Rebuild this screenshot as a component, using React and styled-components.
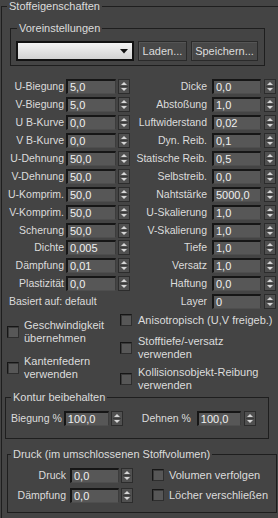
import React from 'react';
import styled, { createGlobalStyle } from 'styled-components';

const GlobalStyle = createGlobalStyle`
  html, body {
    margin: 0;
    padding: 0;
    background: #444444;
  }
  body {
    font-family: "Liberation Sans", Arial, sans-serif;
    font-size: 10.5px;
    color: #dcdcdc;
  }
`;

const Panel = styled.div`
  width: 278px;
  height: 518px;
  overflow: hidden;
  background: #444444;
`;

const Group = styled.fieldset`
  box-sizing: border-box;
  margin: ${(p) => p.$margin || '0'};
  padding: 0;
  width: ${(p) => p.$width}px;
  min-width: 0;
  min-height: ${(p) => (p.$minHeight ? `${p.$minHeight}px` : 'auto')};
  border: 1px solid #1e1e1e;
`;

const Legend = styled.legend`
  margin-left: ${(p) => p.$offset}px;
  padding: 0 2px;
  line-height: 13px;
  height: 13px;
  font-size: 11px;
  color: #dcdcdc;
  white-space: nowrap;
`;

const PresetRow = styled.div`
  display: flex;
  gap: 4px;
  padding: 6px 0 4px 5px;
`;

const Dropdown = styled.div`
  box-sizing: border-box;
  width: 118px;
  height: 20px;
  border: 2px solid #121212;
  background: linear-gradient(#f4f4f4, #d2d2d2);
  display: flex;
  align-items: center;
  justify-content: flex-end;
  padding-right: 4px;
`;

const Button = styled.div`
  box-sizing: border-box;
  width: ${(p) => p.$width}px;
  height: 20px;
  border: 1px solid #2a2a2a;
  background: #484848;
  box-shadow: inset 1px 1px 0 #555555;
  display: flex;
  align-items: center;
  justify-content: center;
  font-size: 11px;
  color: #dcdcdc;
`;

const Columns = styled.div`
  display: flex;
  margin-top: ${(p) => p.$top || 0}px;
`;

const Column = styled.div`
  width: ${(p) => p.$width}px;
  padding-left: ${(p) => p.$padLeft || 0}px;
  box-sizing: border-box;
  display: flex;
  flex-direction: column;
`;

const ParamRow = styled.div`
  height: 17.9px;
  display: flex;
  align-items: center;
  justify-content: ${(p) => (p.$start ? 'flex-start' : 'flex-end')};
  padding-right: ${(p) => p.$padRight || 0}px;
  padding-left: ${(p) => p.$padLeft || 0}px;
`;

const Label = styled.span`
  white-space: nowrap;
  margin-right: ${(p) => p.$gap ?? 2}px;
  margin-left: ${(p) => p.$left || 0}px;
  width: ${(p) => (p.$width ? `${p.$width}px` : 'auto')};
  text-align: right;
  line-height: 13px;
`;

const Field = styled.div`
  box-sizing: border-box;
  width: ${(p) => p.$width}px;
  height: 15px;
  background: #575757;
  border-top: 2px solid #161616;
  border-left: 2px solid #161616;
  border-right: 1px solid #3c3c3c;
  border-bottom: 1px solid #4e4e4e;
  color: #f0f0f0;
  font-size: 11px;
  line-height: 12px;
  padding-left: 2px;
  white-space: nowrap;
  overflow: hidden;
`;

const SpinBox = styled.div`
  box-sizing: border-box;
  width: 12px;
  height: 15px;
  margin-left: ${(p) => p.$left ?? 2}px;
  background: #505050;
  border: 1px solid #2c2c2c;
  display: flex;
  svg {
    display: block;
  }
`;

const CheckColumn = styled.div`
  width: ${(p) => p.$width}px;
  padding-left: ${(p) => p.$padLeft || 0}px;
  box-sizing: border-box;
  display: flex;
  flex-direction: column;
`;

const CheckItem = styled.div`
  display: flex;
  align-items: center;
  gap: ${(p) => p.$gap ?? 6}px;
  margin-top: ${(p) => p.$top || 0}px;
  margin-left: ${(p) => p.$left || 0}px;
  line-height: 13px;
  font-size: 11px;
`;

const Box = styled.div`
  box-sizing: border-box;
  flex: none;
  width: 12px;
  height: 12px;
  background: #575757;
  border-top: 1px solid #161616;
  border-left: 1px solid #161616;
  border-right: 1px solid #2e2e2e;
  border-bottom: 1px solid #2e2e2e;
  box-shadow: inset 1px 1px 0 #3a3a3a;
`;

const CheckText = styled.span`
  white-space: nowrap;
`;

const InlineRow = styled.div`
  display: flex;
  align-items: center;
  height: 15px;
  padding: ${(p) => p.$padding || '0'};
  margin-top: ${(p) => p.$top || 0}px;
`;

const Spacer = styled.div`
  height: ${(p) => p.$height}px;
`;

function Spinner({ left }) {
  return (
    <SpinBox $left={left}>
      <svg width="10" height="13" viewBox="0 0 10 13">
        <path d="M2 5 L5 2 L8 5 Z" fill="#d6d6d6" />
        <line x1="1" y1="6.5" x2="9" y2="6.5" stroke="#3a3a3a" strokeWidth="1" />
        <path d="M2 8 L5 11 L8 8 Z" fill="#d6d6d6" />
      </svg>
    </SpinBox>
  );
}

const leftParams = [
  ['U-Biegung', '5,0'],
  ['V-Biegung', '5,0'],
  ['U B-Kurve', '0,0'],
  ['V B-Kurve', '0,0'],
  ['U-Dehnung', '50,0'],
  ['V-Dehnung', '50,0'],
  ['U-Komprim.', '50,0'],
  ['V-Komprim.', '50,0'],
  ['Scherung', '50,0'],
  ['Dichte', '0,005'],
  ['Dämpfung', '0,01'],
  ['Plastizität', '0,0'],
];

const rightParams = [
  ['Dicke', '0,0'],
  ['Abstoßung', '1,0'],
  ['Luftwiderstand', '0,02'],
  ['Dyn. Reib.', '0,1'],
  ['Statische Reib.', '0,5'],
  ['Selbstreib.', '0,0'],
  ['Nahtstärke', '5000,0'],
  ['U-Skalierung', '1,0'],
  ['V-Skalierung', '1,0'],
  ['Tiefe', '1,0'],
  ['Versatz', '1,0'],
  ['Haftung', '0,0'],
  ['Layer', '0'],
];

function DropArrow() {
  return (
    <svg width="8" height="5" viewBox="0 0 8 5">
      <path d="M0 0 L8 0 L4 4.5 Z" fill="#111" />
    </svg>
  );
}

export default function App() {
  return (
    <Panel>
      <GlobalStyle />
      <Group $width={292} $margin="0 0 0 1px" $minHeight={540}>
        <Legend $offset={5}>Stoffeigenschaften</Legend>

        <Group $width={255} $margin="9px 0 0 8px">
          <Legend $offset={6}>Voreinstellungen</Legend>
          <PresetRow>
            <Dropdown>
              <DropArrow />
            </Dropdown>
            <Button $width={49}>Laden...</Button>
            <Button $width={67}>Speichern...</Button>
          </PresetRow>
        </Group>

        <Columns $top={12}>
          <Column $width={129}>
            {leftParams.map(([label, value]) => (
              <ParamRow key={label} $padRight={1}>
                <Label>{label}</Label>
                <Field $width={50}>{value}</Field>
                <Spinner />
              </ParamRow>
            ))}
            <ParamRow $start $padLeft={7}>
              <Label>Basiert auf: default</Label>
            </ParamRow>
          </Column>
          <Column $width={145}>
            {rightParams.map(([label, value]) => (
              <ParamRow key={label}>
                <Label $gap={5}>{label}</Label>
                <Field $width={49}>{value}</Field>
                <Spinner left={3} />
              </ParamRow>
            ))}
          </Column>
        </Columns>

        <Columns>
          <CheckColumn $width={118} $padLeft={5}>
            <CheckItem $top={8} $gap={5}>
              <Box />
              <CheckText>
                Geschwindigkeit
                <br />
                übernehmen
              </CheckText>
            </CheckItem>
            <CheckItem $top={10} $gap={5}>
              <Box />
              <CheckText>
                Kantenfedern
                <br />
                verwenden
              </CheckText>
            </CheckItem>
          </CheckColumn>
          <CheckColumn $width={156}>
            <CheckItem $top={3}>
              <Box />
              <CheckText>Anisotropisch (U,V freigeb.)</CheckText>
            </CheckItem>
            <CheckItem $top={8}>
              <Box />
              <CheckText>
                Stofftiefe/-versatz
                <br />
                verwenden
              </CheckText>
            </CheckItem>
            <CheckItem $top={5}>
              <Box />
              <CheckText>
                Kollisionsobjekt-Reibung
                <br />
                verwenden
              </CheckText>
            </CheckItem>
          </CheckColumn>
        </Columns>

        <Group $width={264} $margin="-1px 0 0 3px">
          <Legend $offset={5}>Kontur beibehalten</Legend>
          <InlineRow $padding="0 0 0 5px" $top={7}>
            <Label>Biegung %</Label>
            <Field $width={45}>100,0</Field>
            <Spinner left={2} />
            <Label $left={19} $gap={6}>
              Dehnen %
            </Label>
            <Field $width={44}>100,0</Field>
            <Spinner left={3} />
          </InlineRow>
          <Spacer $height={12} />
        </Group>

        <Group $width={270} $margin="9px 0 0 5px">
          <Legend $offset={3}>Druck (im umschlossenen Stoffvolumen)</Legend>
          <InlineRow $top={7}>
            <Label $width={58} $gap={4}>
              Druck
            </Label>
            <Field $width={49}>0,0</Field>
            <Spinner left={2} />
            <CheckItem $left={19} $gap={5}>
              <Box />
              <CheckText>Volumen verfolgen</CheckText>
            </CheckItem>
          </InlineRow>
          <InlineRow $top={5}>
            <Label $width={58} $gap={4}>
              Dämpfung
            </Label>
            <Field $width={49}>0,0</Field>
            <Spinner left={2} />
            <CheckItem $left={19} $gap={5}>
              <Box />
              <CheckText>Löcher verschließen</CheckText>
            </CheckItem>
          </InlineRow>
          <Spacer $height={9} />
        </Group>
      </Group>
    </Panel>
  );
}
